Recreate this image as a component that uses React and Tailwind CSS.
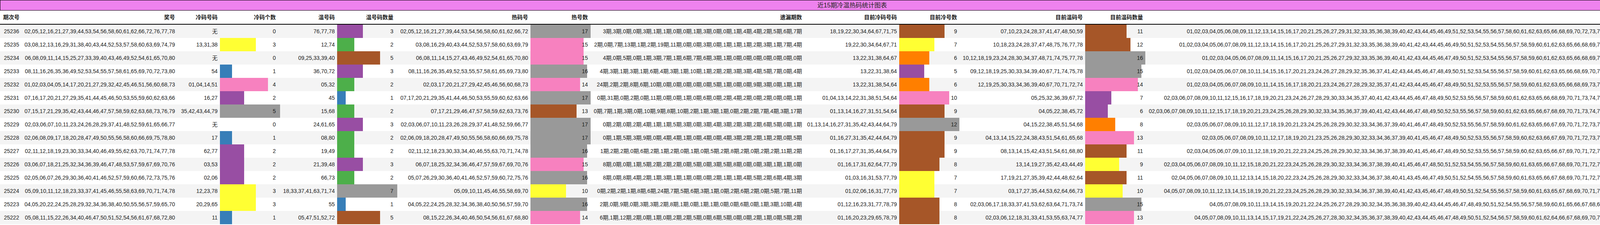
import React from "react";

const raw = [
  ["25236","02,05,12,16,21,27,39,44,53,54,56,58,60,61,62,66,72,76,77,78","","76,77,78","3期,3期,0期,0期,3期,1期,1期,0期,0期,1期,3期,0期,0期,1期,4期,4期,2期,5期,6期,7期","18,19,22,30,34,64,67,71,75","07,10,23,24,28,37,41,47,48,50,59"],
  ["25235","03,08,12,13,16,29,31,38,40,43,44,52,53,57,58,60,63,69,74,79","13,31,38","12,74","2期,0期,7期,13期,1期,2期,19期,11期,0期,0期,3期,0期,1期,1期,1期,2期,3期,1期,7期,4期","19,22,30,34,64,67,71","10,18,23,24,28,37,47,48,75,76,77,78"],
  ["25234","06,08,09,11,14,15,25,27,33,39,40,43,46,49,52,54,61,65,70,80","","09,25,33,39,40","4期,0期,5期,0期,1期,3期,7期,1期,6期,7期,6期,3期,1期,0期,0期,0期,0期,0期,0期,0期","13,22,31,38,64,67","10,12,18,19,23,24,28,30,34,37,48,71,74,75,77,78"],
  ["25233","08,11,16,26,35,36,49,52,53,54,55,57,58,61,65,69,70,72,73,80","54","36,70,72","4期,3期,1期,3期,1期,6期,4期,3期,1期,10期,1期,2期,2期,3期,3期,4期,5期,7期,0期,4期","13,22,31,38,64","09,12,18,19,25,30,33,34,39,40,67,71,74,75,78"],
  ["25232","01,02,03,04,05,14,17,20,21,27,29,32,42,45,46,51,56,60,68,73","01,04,14,51","05,32","24期,2期,2期,8期,6期,10期,0期,0期,0期,0期,0期,5期,1期,0期,0期,9期,3期,0期,1期,1期","13,22,31,38,54,64","12,19,25,30,33,34,36,39,40,67,70,71,72,74"],
  ["25231","07,16,17,20,21,27,29,35,41,44,45,46,50,53,55,59,60,62,63,66","16,27","45","0期,31期,0期,2期,0期,11期,0期,0期,1期,0期,6期,0期,2期,4期,2期,0期,2期,0期,0期,1期","01,04,13,14,22,31,38,51,54,64","05,25,32,36,39,67,72"],
  ["25230","07,15,17,21,29,35,42,43,44,46,47,57,58,59,62,63,68,73,76,79","35,42,43,44,79","15,68","0期,7期,1期,3期,0期,10期,9期,8期,10期,2期,1期,3期,1期,0期,2期,2期,7期,4期,3期,17期","01,13,14,16,27,31,51,54,64","04,05,22,38,45,72"],
  ["25229","02,03,06,07,10,11,23,24,26,28,29,37,41,48,52,59,61,65,66,77","","24,61,65","0期,2期,0期,2期,4期,1期,1期,5期,3期,0期,3期,4期,3期,2期,3期,2期,6期,5期,0期,1期","01,13,14,16,27,31,35,42,43,44,64,79","04,15,22,38,45,51,54,68"],
  ["25228","02,06,08,09,17,18,20,28,47,49,50,55,56,58,60,66,69,75,78,80","17","08,80","0期,1期,5期,3期,9期,0期,4期,4期,1期,0期,4期,0期,4期,3期,2期,2期,1期,2期,0期,5期","01,16,27,31,35,42,44,64,79","04,13,14,15,22,24,38,43,51,54,61,65,68"],
  ["25227","02,11,12,18,19,23,30,33,34,40,46,49,55,62,63,70,71,74,77,78","62,77","19,49","1期,2期,2期,0期,6期,2期,1期,2期,0期,1期,0期,5期,2期,8期,2期,0期,2期,2期,11期,2期","01,16,17,27,31,35,44,64,79","08,13,14,15,42,43,51,54,61,68,80"],
  ["25226","03,06,07,18,21,25,32,34,36,39,46,47,48,53,57,59,67,69,70,76","03,53","21,39,48","8期,0期,0期,1期,5期,2期,2期,2期,0期,5期,0期,3期,5期,8期,0期,0期,3期,1期,1期,0期","01,16,17,31,62,64,77,79","13,14,19,27,35,42,43,44,49"],
  ["25225","02,05,06,07,26,29,30,36,40,41,46,52,57,59,60,66,72,73,75,76","02,06","66,73","8期,0期,8期,4期,2期,1期,3期,1期,1期,0期,0期,2期,1期,1期,4期,5期,2期,6期,4期,3期","01,03,16,31,53,77,79","17,19,21,27,35,39,42,44,48,62,64"],
  ["25224","05,09,10,11,12,18,23,33,37,41,45,46,55,58,63,69,70,71,74,78","12,23,78","18,33,37,41,63,71,74","0期,2期,2期,1期,8期,6期,24期,7期,5期,6期,3期,1期,0期,2期,6期,2期,0期,5期,7期,11期","01,02,06,16,31,77,79","03,17,27,35,44,53,62,64,66,73"],
  ["25223","04,05,20,22,24,25,28,29,32,34,36,38,40,50,55,56,57,59,65,70","20,29,65","55","2期,0期,9期,0期,3期,3期,2期,8期,1期,0期,1期,1期,0期,0期,6期,0期,1期,3期,10期,4期","01,12,16,23,31,77,78,79","02,03,06,17,18,33,37,41,53,62,63,64,71,73,74"],
  ["25222","05,08,11,15,22,26,34,40,46,47,50,51,52,54,56,61,67,68,72,80","11","05,47,51,52,72","6期,1期,12期,2期,0期,1期,0期,2期,2期,5期,0期,6期,5期,0期,0期,2期,1期,0期,5期,2期","01,16,20,23,29,65,78,79","02,03,06,12,18,31,33,41,53,55,63,74,77"],
];

const C = { blue: "#377eb8", green: "#4daf4a", purple: "#984ea3", orange: "#ff7f00", yellow: "#ffff33", brown: "#a65628", pink: "#f781bf", gray: "#999999" };
const split = (s) => (s ? s.split(",") : []);
const pad = (n) => String(n).padStart(2, "0");

const coldC = { 1: C.blue, 2: C.purple, 3: C.yellow, 4: C.pink, 5: C.gray };
const warmC = { 1: C.blue, 2: C.green, 3: C.purple, 5: C.brown, 7: C.gray };
const hotC = { 10: C.yellow, 13: C.brown, 14: C.pink, 15: C.pink, 16: C.gray, 17: C.gray };
const curColdC = { 5: C.purple, 6: C.orange, 7: C.yellow, 8: C.brown, 9: C.brown, 10: C.pink, 12: C.gray };
const curWarmC = { 6: C.purple, 7: C.purple, 8: C.orange, 9: C.yellow, 10: C.yellow, 11: C.brown, 12: C.brown, 13: C.pink, 14: C.pink, 15: C.gray, 16: C.gray };
const curHotC = (v) => (v === 57 ? C.pink : C.gray);

const rows = raw.map(([id, draw, cold, warm, miss, cc, cw]) => {
  const d = split(draw), c = split(cold), w = split(warm);
  const hot = d.filter((x) => !c.includes(x) && !w.includes(x));
  const ccs = split(cc), cws = split(cw);
  const ch = [];
  for (let i = 1; i <= 80; i++) { const p = pad(i); if (!ccs.includes(p) && !cws.includes(p)) ch.push(p); }
  return { id, draw, cold: cold || "无", nc: c.length, warm, nw: w.length, hot: hot.join(","), nh: hot.length, miss, cc, ncc: ccs.length, cw, ncw: cws.length, ch: ch.join(","), nch: ch.length };
});

const cols = "grid grid-cols-[50px_404px_109px_150px_150px_150px_345px_152px_549px_243px_156px_320px_154px_1275px_154px]";

function Bar({ v, max, color, pr }) {
  return (
    <div className={`relative h-full flex items-center justify-end ${pr}`}>
      {v > 0 && <div className="absolute left-0 top-0 bottom-0" style={{ width: (v / max) * 154, background: color }} />}
      <span className="relative">{v}</span>
    </div>
  );
}

const T = ({ children }) => <div className="flex items-center justify-end pr-1.5 whitespace-nowrap">{children}</div>;
const H = ({ children, cls = "justify-end pr-1.5" }) => <div className={`flex items-center font-bold whitespace-nowrap ${cls}`}>{children}</div>;

export default function App() {
  return (
    <div className="w-[4363px] overflow-hidden bg-white text-[14px] leading-[20px] text-[#1a1a1a]" style={{ fontFamily: '"Liberation Sans", "Noto Sans CJK SC", sans-serif' }}>
      <div className="h-[27px] w-full box-border bg-[#ee82ee] border border-black flex items-center justify-center text-[16px] leading-[20px] text-[#222]">近15期冷温热码统计图表</div>
      <div className={`${cols} h-[36px] border-b-2 border-black`}>
        <H cls="justify-start pl-2">期次号</H>
        <H>奖号</H>
        <H>冷码号码</H>
        <H cls="justify-end pr-[7px]">冷码个数</H>
        <H>温号码</H>
        <H>温号码数量</H>
        <H>热码号</H>
        <H cls="justify-end pr-[5px]">热号数</H>
        <H>遗漏期数</H>
        <H>目前冷码号码</H>
        <H cls="justify-end pr-2">目前冷号数</H>
        <H>目前温码号</H>
        <H>目前温码数量</H>
        <H>目前热号</H>
        <H cls="justify-end pr-[4px]">当前热码数</H>
      </div>
      {rows.map((r, i) => (
        <div key={r.id} className={`${cols} h-[34px] ${i % 2 === 0 ? "bg-[#f4f4f4]" : "bg-white"}`}>
          <div className="flex items-center pl-2.5">{r.id}</div>
          <T>{r.draw}</T>
          <T>{r.cold}</T>
          <Bar v={r.nc} max={5} color={coldC[r.nc]} pr="pr-[7px]" />
          <T>{r.warm}</T>
          <Bar v={r.nw} max={7} color={warmC[r.nw]} pr="pr-1.5" />
          <T>{r.hot}</T>
          <Bar v={r.nh} max={17} color={hotC[r.nh]} pr="pr-[5px]" />
          <T>{r.miss}</T>
          <T>{r.cc}</T>
          <Bar v={r.ncc} max={12} color={curColdC[r.ncc]} pr="pr-2" />
          <T>{r.cw}</T>
          <Bar v={r.ncw} max={16} color={curWarmC[r.ncw]} pr="pr-1.5" />
          <T>{r.ch}</T>
          <Bar v={r.nch} max={65} color={curHotC(r.nch)} pr="pr-[4px]" />
        </div>
      ))}
    </div>
  );
}
